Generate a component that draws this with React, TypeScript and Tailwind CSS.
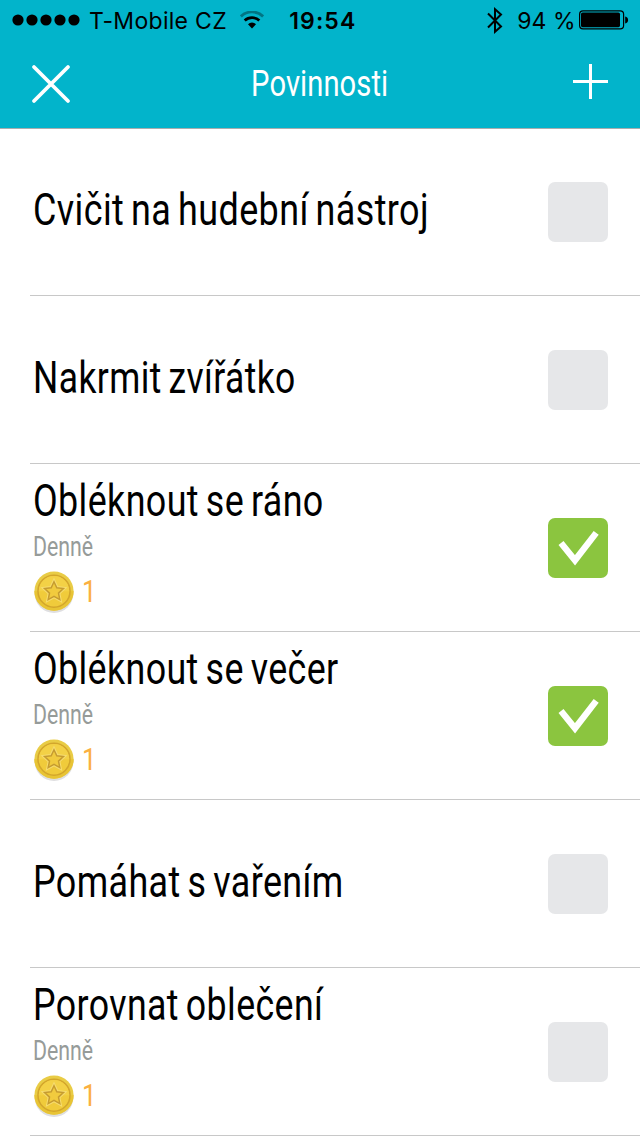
import { useState } from 'react';

interface Chore {
  id: number;
  title: string;
  // condensing of the title glyphs
  fit: string;
  repeat?: string;
  coins?: number;
  done: boolean;
}

const INITIAL_CHORES: Chore[] = [
  { id: 1, title: 'Cvičit na hudební nástroj', fit: 'scale-x-[0.816]', done: false },
  { id: 2, title: 'Nakrmit zvířátko', fit: 'scale-x-[0.806]', done: false },
  { id: 3, title: 'Obléknout se ráno', fit: 'scale-x-[0.814]', repeat: 'Denně', coins: 1, done: true },
  { id: 4, title: 'Obléknout se večer', fit: 'scale-x-[0.813]', repeat: 'Denně', coins: 1, done: true },
  { id: 5, title: 'Pomáhat s vařením', fit: 'scale-x-[0.815]', done: false },
  { id: 6, title: 'Porovnat oblečení', fit: 'scale-x-[0.812]', repeat: 'Denně', coins: 1, done: false }
];

function StatusBar() {
  return (
    <div className="flex h-10 items-center pl-[12px] pr-[11px] font-['Inter',sans-serif] text-[23px] leading-[40px] text-black">
      <svg width="68" height="12" viewBox="0 0 68 12" className="shrink-0">
        {[6, 20, 34, 48, 62].map((cx) => (
          <circle key={cx} cx={cx} cy="6" r="5.6" />
        ))}
      </svg>
      <span className="ml-[9px] w-[152px] whitespace-nowrap pt-px tracking-[0.3px]">T-Mobile CZ</span>
      <svg width="24" height="18" viewBox="0 0 24 18" fill="none" stroke="#000" className="shrink-0">
        <path d="M0.9 5.4a16 16 0 0 1 22.2 0" strokeWidth="2.8" opacity="0.35" />
        <path d="M4.7 9.6a10.6 10.6 0 0 1 14.6 0" strokeWidth="2.8" />
        <path d="M12 17.4L8 13.2a5.8 5.8 0 0 1 8 0z" fill="#000" stroke="none" />
      </svg>
      <span className="ml-[25px] w-[199px] whitespace-nowrap pt-px font-semibold tracking-[1.1px]">19:54</span>
      <svg width="16" height="27" viewBox="0 0 16 27" fill="none" stroke="#000" strokeWidth="2" className="shrink-0">
        <path d="M1 6.5l13 13-6 5.3V2.2l6 5.3-13 13" />
      </svg>
      <span className="ml-[14px] w-[62px] whitespace-nowrap pt-px">94 %</span>
      <svg width="50" height="20" viewBox="0 0 50 20" className="shrink-0">
        <rect x="0.6" y="0.9" width="44" height="18" rx="3.4" fill="none" stroke="#000" strokeWidth="1.2" />
        <rect x="2" y="2.6" width="39" height="14.6" rx="1.6" />
        <path d="M46.2 6.6q2.9 0.8 2.9 3.4t-2.9 3.4z" />
      </svg>
    </div>
  );
}

function CoinIcon() {
  const star = 'M20 10.8l2.8 6 6.6 0.8-4.9 4.5 1.3 6.5-5.8-3.2-5.8 3.2 1.3-6.5-4.9-4.5 6.6-0.8z';
  return (
    <svg width="40" height="43" viewBox="0 0 40 43" className="shrink-0">
      <circle cx="20" cy="22.6" r="19.4" fill="#dfdfe1" />
      <circle cx="20" cy="20.2" r="19.6" fill="#e9cc45" />
      <path d="M0.4 20.2a19.6 19.6 0 0 0 39.2 0z" fill="#e8c435" />
      <circle cx="20" cy="20.2" r="16" fill="#f0cb3b" stroke="#d3a62c" strokeWidth="1.5" />
      <path d="M4.8 20.2a15.2 15.2 0 0 1 30.4 0z" fill="#f3d146" />
      <path d={star} fill="#f2cd3f" stroke="#f6dc70" strokeWidth="3.6" />
      <path d={star} fill="#f1cb3e" stroke="#c69c30" strokeWidth="1.5" />
    </svg>
  );
}

interface CheckboxProps {
  checked: boolean;
  label: string;
  onToggle: () => void;
}

function Checkbox({ checked, label, onToggle }: CheckboxProps) {
  return (
    <button
      type="button"
      role="checkbox"
      aria-checked={checked}
      aria-label={label}
      onClick={onToggle}
      className={`size-[60px] shrink-0 rounded-[7px] ${checked ? 'bg-[#8bc53f]' : 'bg-[#e6e7e9]'}`}
    >
      {checked && (
        <svg width="60" height="60" viewBox="0 0 60 60" fill="none" stroke="#fff" strokeWidth="6.4">
          <path d="M13 25L27 42.3 48.2 14.9" />
        </svg>
      )}
    </button>
  );
}

export default function App() {
  const [chores, setChores] = useState<Chore[]>(INITIAL_CHORES);

  const toggle = (id: number) => {
    setChores(chores.map((c) => (c.id === id ? { ...c, done: !c.done } : c)));
  };

  return (
    <div className="h-[1136px] w-[640px] overflow-hidden bg-white font-['Roboto',sans-serif]">
      <header className="relative z-10 h-32 bg-[#02b4cb] shadow-[0_1px_0_#a9adae]">
        <StatusBar />
        <div className="flex h-[88px] items-center justify-between pl-[31px] pr-8">
          <button type="button" aria-label="Zavřít">
            <svg width="40" height="40" viewBox="0 0 40 40" stroke="#fff" strokeWidth="3.8" strokeLinecap="round">
              <path d="M3 3l34 34M37 3L3 37" />
            </svg>
          </button>
          <h1 className="mr-[5px] scale-x-[0.81] text-[36px] font-normal leading-[40px] tracking-[0.1px] text-white">Povinnosti</h1>
          <button type="button" aria-label="Přidat" className="pb-[6px]">
            <svg width="35" height="35" viewBox="0 0 35 35" stroke="#fff" strokeWidth="3">
              <path d="M17.5 0v35M0 17.5h35" />
            </svg>
          </button>
        </div>
      </header>

      <ul>
        {chores.map((chore) => (
          <li key={chore.id} className="ml-[30px] flex h-[168px] items-center justify-between border-b border-[#c8c8c8] pl-[3px] pr-8 pt-px">
            <div className={chore.repeat ? 'flex h-full flex-col pt-[14px]' : 'pb-1'}>
              <h2 className={`w-fit origin-left whitespace-nowrap text-[44px] font-normal leading-[44px] tracking-[0.5px] [word-spacing:-3px] text-black ${chore.fit}`}>
                {chore.title}
              </h2>
              {chore.repeat && (
                <p className="mt-[11px] w-fit origin-left scale-x-[0.79] text-[27px] font-normal leading-[27px] text-[#969b99]">
                  {chore.repeat}
                </p>
              )}
              {chore.coins && (
                <div className="mt-[10px] flex items-center pl-px">
                  <CoinIcon />
                  <span className="ml-[8px] origin-left scale-x-[0.83] pb-[2px] text-[31px] leading-[38px] text-[#fbb040]">{chore.coins}</span>
                </div>
              )}
            </div>
            <Checkbox checked={chore.done} label={chore.title} onToggle={() => toggle(chore.id)} />
          </li>
        ))}
      </ul>
    </div>
  );
}
